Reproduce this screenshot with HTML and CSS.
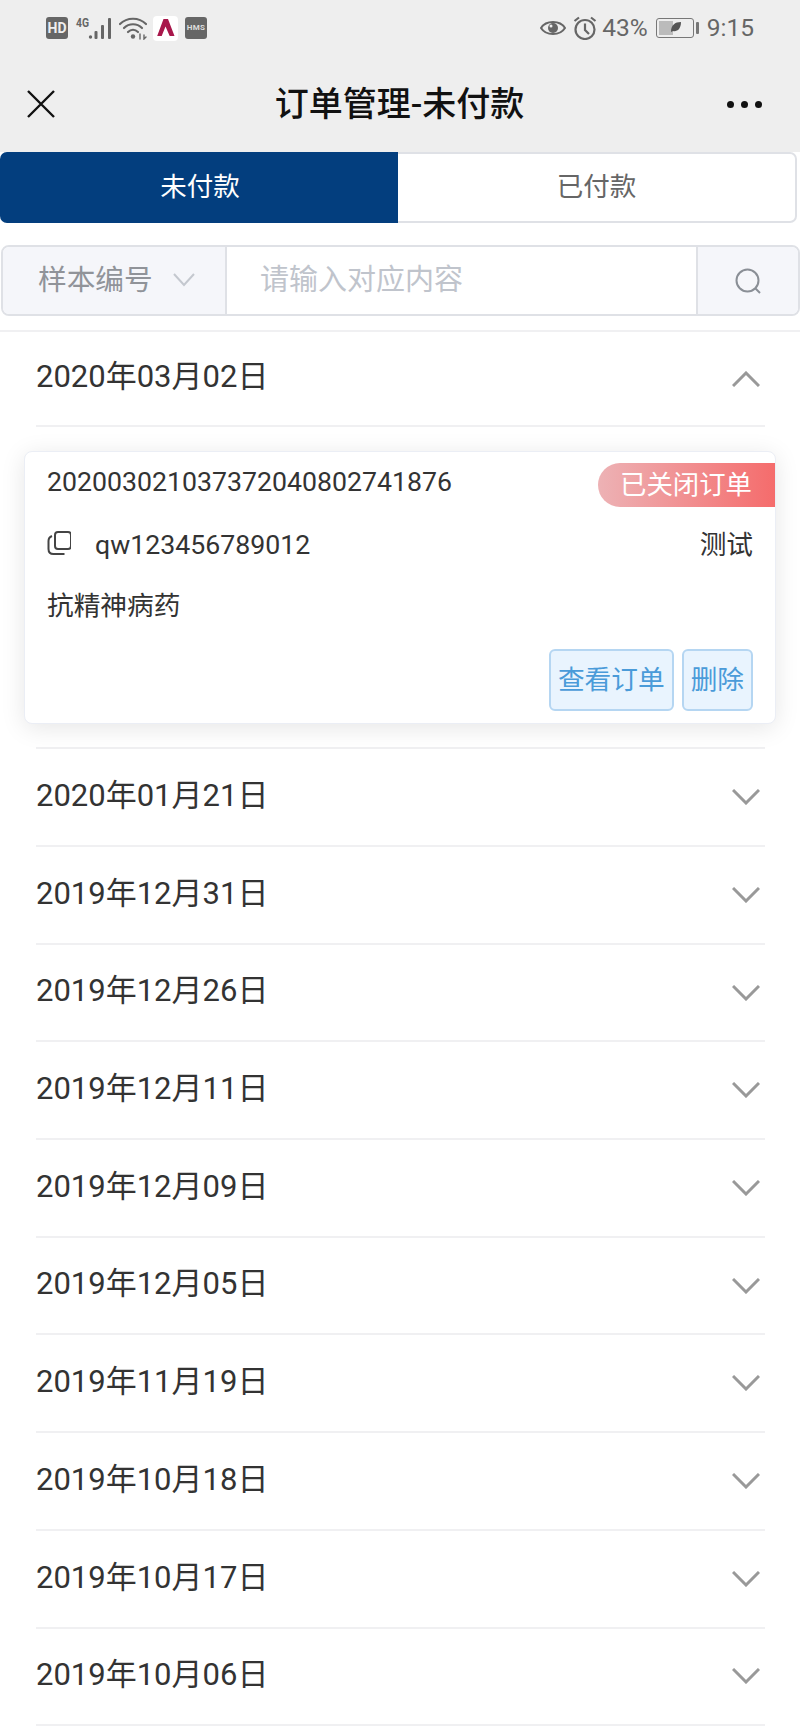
FILE: index.html
```html
<!DOCTYPE html>
<html lang="zh-CN">
<head>
  <meta charset="UTF-8" />
  <meta name="viewport" content="width=device-width, initial-scale=1.0"/>
  <title>订单管理-未付款</title>
  <link rel="stylesheet" href="styles.css">
</head>
<body>
  <div class="top">
    <div class="statusbar">
      <div class="status-left">
        <span class="hd">HD</span>
        <svg class="sig" width="38" height="24" viewBox="0 0 38 24" fill="#666">
          <text x="1" y="11" class="sig-text" textLength="13" lengthAdjust="spacingAndGlyphs">4G</text>
          <circle cx="15.500" cy="21" r="1.700"/>
          <rect x="19.500" y="15" width="3" height="8" rx="1"/>
          <rect x="26" y="9" width="3" height="14" rx="1"/>
          <rect x="33" y="2" width="3" height="21" rx="1"/>
        </svg>
        <svg class="wifi" width="28" height="24" viewBox="0 0 28 24" fill="none" stroke="#666" stroke-width="2.200" stroke-linecap="round">
          <path d="M1 8C8 1 20 1 27 8"/>
          <path d="M5 12C10 7 18 7 23 12"/>
          <path d="M9 16C12 13 16 13 19 16"/>
          <circle cx="14" cy="20.500" r="2.200" fill="#666" stroke="none"/>
          <path d="M21 18v5M25 19v4l2-2" stroke-width="1.400"/>
        </svg>
        <span class="app-a">
          <svg width="25" height="25" viewBox="0 0 25 25" fill="#a8174b"><path d="M10.500 3h4.500L21.500 20h-4.800L12.500 10.500 8.700 20H4.200Z"/></svg>
        </span>
        <span class="hms">HMS</span>
      </div>
      <div class="status-right">
        <svg width="26" height="18" viewBox="0 0 26 18" fill="none" stroke="#666" stroke-width="2"><path d="M1 9C6 1 20 1 25 9C20 17 6 17 1 9Z"/><circle cx="13" cy="9" r="5" fill="#666" stroke="none"/><circle cx="11" cy="7" r="1.500" fill="#eee" stroke="none"/></svg>
        <svg class="alarm" width="24" height="24" viewBox="0 0 24 24" fill="none" stroke="#666" stroke-width="2.200"><circle cx="12" cy="13.500" r="9.500"/><path d="M12 7.500v6.500l4 4M1.500 5L6 1.500M22.500 5L18 1.500"/></svg>
        <span class="pct">43%</span>
        <span class="batt"><span class="batt-fill"></span><svg class="leaf" width="12" height="12" viewBox="0 0 12 12" fill="#555"><path d="M1 11C1 4 5 1 11 1C11 8 7 11 3 10Z"/></svg></span>
        <span class="batt-tip"></span>
        <span class="clock">9:15</span>
      </div>
    </div>
    <div class="navbar">
      <svg width="28" height="28" viewBox="0 0 28 28" fill="none" stroke="#111" stroke-width="2.400"><path d="M1 1L27 27M27 1L1 27"/></svg>
      <h1>订单管理-未付款</h1>
      <div class="dots"><i></i><i></i><i></i></div>
    </div>
  </div>

  <div class="tabs">
    <div class="tab active">未付款</div>
    <div class="tab">已付款</div>
  </div>

  <div class="search">
    <div class="search-type">
      <span>样本编号</span>
      <svg width="24" height="14" viewBox="0 0 24 14" fill="none" stroke="#c4c8cf" stroke-width="2"><path d="M2 1L12 12L22 1"/></svg>
    </div>
    <div class="search-input">请输入对应内容</div>
    <div class="search-btn">
      <svg width="26" height="26" viewBox="0 0 26 26" fill="none" stroke="#8a8f96" stroke-width="2"><circle cx="12.500" cy="12.500" r="11"/><path d="M20.500 20.500L25 25"/></svg>
    </div>
  </div>

  <div class="list">
    <div class="row open">
      <span>2020年03月02日</span>
      <svg class="chev" width="28" height="16" viewBox="0 0 28 16" fill="none" stroke="#999" stroke-width="3"><path d="M1 15L14 2L27 15"/></svg>
    </div>

    <div class="card">
      <div class="card-top">
        <span class="order-no">202003021037372040802741876</span>
        <span class="tag">已关闭订单</span>
      </div>
      <div class="card-mid">
        <svg class="copy" width="24" height="24" viewBox="0 0 24 24" fill="none" stroke="#444" stroke-width="2"><rect x="8" y="1" width="16" height="17" rx="3"/><path d="M5 5C2.500 6 1.500 8 1.500 10v8c0 3 2 5 5 5h11"/></svg>
        <span class="sample">qw123456789012</span>
        <span class="tester">测试</span>
      </div>
      <div class="drug">抗精神病药</div>
      <div class="card-actions">
        <button class="btn">查看订单</button>
        <button class="btn">删除</button>
      </div>
    </div>

    <div class="row after-card">
      <span>2020年01月21日</span>
      <svg class="chev" width="28" height="16" viewBox="0 0 28 16" fill="none" stroke="#999" stroke-width="3"><path d="M1 1L14 14L27 1"/></svg>
    </div>
    <div class="row">
      <span>2019年12月31日</span>
      <svg class="chev" width="28" height="16" viewBox="0 0 28 16" fill="none" stroke="#999" stroke-width="3"><path d="M1 1L14 14L27 1"/></svg>
    </div>
    <div class="row">
      <span>2019年12月26日</span>
      <svg class="chev" width="28" height="16" viewBox="0 0 28 16" fill="none" stroke="#999" stroke-width="3"><path d="M1 1L14 14L27 1"/></svg>
    </div>
    <div class="row">
      <span>2019年12月11日</span>
      <svg class="chev" width="28" height="16" viewBox="0 0 28 16" fill="none" stroke="#999" stroke-width="3"><path d="M1 1L14 14L27 1"/></svg>
    </div>
    <div class="row">
      <span>2019年12月09日</span>
      <svg class="chev" width="28" height="16" viewBox="0 0 28 16" fill="none" stroke="#999" stroke-width="3"><path d="M1 1L14 14L27 1"/></svg>
    </div>
    <div class="row">
      <span>2019年12月05日</span>
      <svg class="chev" width="28" height="16" viewBox="0 0 28 16" fill="none" stroke="#999" stroke-width="3"><path d="M1 1L14 14L27 1"/></svg>
    </div>
    <div class="row">
      <span>2019年11月19日</span>
      <svg class="chev" width="28" height="16" viewBox="0 0 28 16" fill="none" stroke="#999" stroke-width="3"><path d="M1 1L14 14L27 1"/></svg>
    </div>
    <div class="row">
      <span>2019年10月18日</span>
      <svg class="chev" width="28" height="16" viewBox="0 0 28 16" fill="none" stroke="#999" stroke-width="3"><path d="M1 1L14 14L27 1"/></svg>
    </div>
    <div class="row">
      <span>2019年10月17日</span>
      <svg class="chev" width="28" height="16" viewBox="0 0 28 16" fill="none" stroke="#999" stroke-width="3"><path d="M1 1L14 14L27 1"/></svg>
    </div>
    <div class="row">
      <span>2019年10月06日</span>
      <svg class="chev" width="28" height="16" viewBox="0 0 28 16" fill="none" stroke="#999" stroke-width="3"><path d="M1 1L14 14L27 1"/></svg>
    </div>
  </div>
</body>
</html>
```

FILE: styles.css
```css
* {
  box-sizing: border-box;
}

html, body {
  height: 1733px;
  overflow: hidden;
}

body {
  margin: 0;
  background: #fff;
  color: #333;
  font-family: Roboto, "Noto Sans CJK SC", sans-serif;
  line-height: 1.3;
}

.top {
  background: #eee;
  height: 152px;
}

.statusbar {
  height: 56px;
  padding: 0 46px 0 46px;
  display: flex;
  justify-content: space-between;
  align-items: center;
}

.status-left, .status-right {
  display: flex;
  align-items: center;
}

.hd {
  width: 22px;
  height: 22px;
  border-radius: 3px;
  background: #666;
  color: #eee;
  font-size: 14px;
  font-weight: 700;
  line-height: 22px;
  text-align: center;
}

.sig {
  margin-left: 7px;
}

.sig-text {
  font-size: 12px;
  font-weight: 700;
}

.wifi {
  margin-left: 6px;
}

.app-a {
  width: 25px;
  height: 25px;
  margin-left: 6px;
  border-radius: 4px;
  background: #fff;
  display: flex;
}

.hms {
  width: 22px;
  height: 22px;
  margin-left: 7px;
  border-radius: 3px;
  background: #666;
  color: #ddd;
  font-size: 8px;
  font-weight: 700;
  letter-spacing: 0.3px;
  line-height: 22px;
  text-align: center;
}

.status-right {
  color: #666;
  font-size: 24.500px;
}

.alarm {
  margin-left: 7px;
}

.pct {
  margin-left: 5px;
}

.batt {
  width: 38px;
  height: 20px;
  margin-left: 8px;
  border: 1.500px solid #777;
  border-radius: 3px;
  display: flex;
  align-items: center;
  position: relative;
  padding: 2px;
}

.batt-fill {
  width: 43%;
  height: 100%;
  background: #bbb;
}

.leaf {
  position: absolute;
  left: 13px;
  top: 2px;
}

.batt-tip {
  width: 3px;
  height: 12px;
  margin-left: 2px;
  background: #777;
  border-radius: 1px;
}

.clock {
  margin-left: 8px;
}

.navbar {
  height: 96px;
  padding: 0 38px 0 27px;
  display: grid;
  grid-template-columns: 1fr auto 1fr;
  align-items: center;
}

.navbar h1 {
  margin: 0 0 0 10px;
  font-size: 34px;
  font-weight: 500;
  color: #111;
}

.dots {
  justify-self: end;
  display: flex;
  gap: 7px;
}

.dots i {
  width: 7px;
  height: 7px;
  border-radius: 50%;
  background: #111;
}

.tabs {
  height: 71px;
  margin-right: 3px;
  display: flex;
}

.tab {
  flex: 1;
  background: #fff;
  border: 2px solid #dfe1e6;
  border-left: 0;
  border-radius: 0 7px 7px 0;
  font-size: 26.500px;
  color: #666;
  display: flex;
  align-items: center;
  justify-content: center;
}

.tab.active {
  flex: 0 0 398px;
  background: #033e7e;
  border: 0;
  border-radius: 7px 0 0 7px;
  color: #fff;
  padding-left: 2px;
}

.search {
  height: 71px;
  margin: 22px 0 14px 1px;
  border: 2px solid #dfe1e6;
  border-radius: 8px;
  display: flex;
  overflow: hidden;
}

.search-type {
  width: 224px;
  padding-left: 35px;
  background: #f5f6fa;
  border-right: 2px solid #dfe1e6;
  color: #909399;
  font-size: 28.700px;
  display: flex;
  align-items: center;
  gap: 19px;
}

.search-type svg {
  margin-top: -2px;
}

.search-input {
  flex: 1;
  padding-left: 33px;
  color: #c0c4cc;
  font-size: 29px;
  display: flex;
  align-items: center;
}

.search-btn {
  width: 102px;
  background: #f5f6fa;
  border-left: 2px solid #dfe1e6;
  display: flex;
  align-items: center;
  justify-content: center;
}

.list {
  border-top: 2px solid #f0f0f2;
}

.row {
  height: 97.700px;
  margin: 0 35px 0 36px;
  border-bottom: 2px solid #f0f0f2;
  font-size: 31px;
  color: #333;
  display: flex;
  justify-content: space-between;
  align-items: center;
  padding-right: 5px;
}

.row span {
  margin-bottom: 2px;
}

.row.open {
  height: 95px;
}

.row.after-card {
  height: 100px;
  border-top: 2px solid #f0f0f2;
}

.card {
  height: 272.500px;
  margin: 24px 24px 23.500px;
  padding: 11px 22px 0;
  background: #fff;
  border: 1px solid #ebeef5;
  border-radius: 8px;
  box-shadow: 0 4px 24px rgba(0, 0, 0, 0.1);
  position: relative;
  font-size: 26.700px;
  line-height: 38px;
}

.card-top {
  height: 38px;
}

.tag {
  position: absolute;
  right: 0;
  top: 11px;
  width: 177px;
  height: 44px;
  padding-left: 22px;
  border-radius: 22px 0 0 22px;
  background: linear-gradient(to right, #edb2b5, #f56c6c);
  color: #fff;
  font-size: 26.400px;
  line-height: 44px;
}

.card-mid {
  height: 38px;
  margin-top: 25px;
  display: flex;
  align-items: center;
}

.copy {
  margin-top: -4px;
}

.sample {
  margin-left: 24px;
  flex: 1;
}

.drug {
  margin-top: 23px;
}

.card-actions {
  margin-top: 24px;
  display: flex;
  justify-content: flex-end;
  gap: 8px;
}

.btn {
  height: 62px;
  padding: 0 7px;
  background: #e9f4fe;
  border: 2px solid #b5d6f2;
  border-radius: 6px;
  color: #4a9bd9;
  font-family: inherit;
  font-size: 26.700px;
  line-height: 38px;
}
```
